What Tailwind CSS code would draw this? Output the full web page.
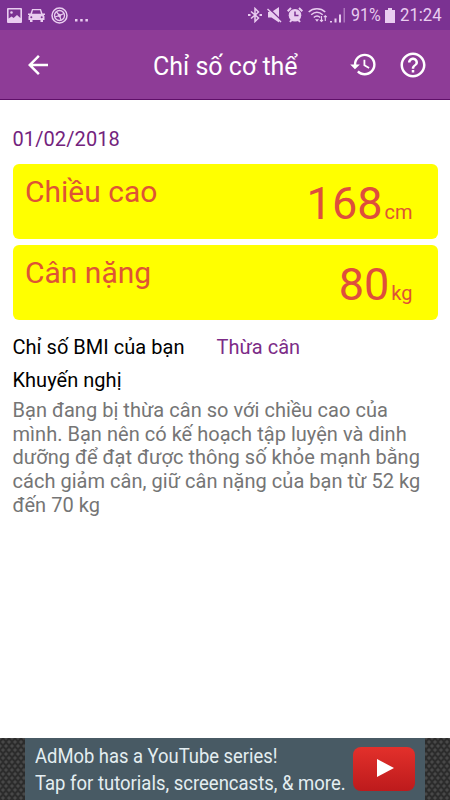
<!DOCTYPE html>
<html lang="vi">
<head>
    <meta charset="UTF-8">
    <meta name="viewport" content="width=device-width, initial-scale=1.0">
    <title>Chỉ số cơ thể</title>
    <script src="https://cdn.jsdelivr.net/npm/@tailwindcss/browser@4"></script>
</head>
<body class="bg-white font-['Roboto',sans-serif]">
    <div class="w-[450px] h-[800px] flex flex-col overflow-hidden">
        <!-- Status bar -->
        <div class="h-[30px] shrink-0 bg-[#7b3292] text-[#e9cdf0] flex items-center justify-between pl-[7px] pr-[8px]">
            <div class="flex items-center">
                <svg class="w-[15px] h-[15px]" viewBox="0 0 15 15" fill="currentColor">
                    <path fill-rule="evenodd" d="M1 0h13a1 1 0 0 1 1 1v13a1 1 0 0 1-1 1H1a1 1 0 0 1-1-1V1a1 1 0 0 1 1-1zM1.600 1.600v9l3-2 2 1.500L10 7l3.400 3V1.600zM4.500 3.200a1.300 1.300 0 1 1 0 2.600 1.300 1.300 0 0 1 0-2.600z"/>
                </svg>
                <svg class="w-[17px] h-[15px] ml-[6px]" viewBox="0 0 17 15" fill="currentColor">
                    <path fill-rule="evenodd" d="M4 1h9l1.500 4.500H17v1.500h-1.200l.7 1.500V12H15v2h-2.500v-2h-8v2H2v-2H.5V8.500L1.200 7H0V5.500h2.500zM5 2.300L4 5.800h9L12 2.300zM3.300 8.200a1 1 0 1 0 0 2 1 1 0 0 0 0-2zm10.400 0a1 1 0 1 0 0 2 1 1 0 0 0 0-2z"/>
                </svg>
                <svg class="w-[17px] h-[17px] ml-[6px]" viewBox="0 0 17 17" fill="none" stroke="currentColor">
                    <circle cx="8.500" cy="8.500" r="7.500" stroke-width="1.500"/>
                    <circle cx="8.500" cy="8.500" r="5" stroke-width="1.300"/>
                    <path d="M8.500 8.500L5.500 5M8.500 8.500l4.500-2M8.500 8.500l1.500 4.500M8.500 8.500L4 10" stroke-width="1.200"/>
                    <circle cx="8.500" cy="8.500" r="1.200" fill="currentColor"/>
                </svg>
                <svg class="w-[13px] h-[3px] ml-[7px] mt-[11px]" viewBox="0 0 13 3" fill="currentColor">
                    <path d="M0 0h2.500v2.500H0zM5.200 0h2.500v2.500H5.200zM10.400 0h2.500v2.500h-2.500z"/>
                </svg>
            </div>
            <div class="flex items-center">
                <svg class="w-[14px] h-[16px]" viewBox="0 0 14 16" fill="none" stroke="currentColor" stroke-width="1.500">
                    <path d="M3 4.500l7.500 6.500L7 14.500v-13L10.500 5 3 11.500"/>
                    <path d="M0 8h2.500M11.500 8H14" stroke-width="2"/>
                </svg>
                <svg class="w-[15px] h-[16px] ml-[5px]" viewBox="0 0 15 16" fill="currentColor">
                    <path d="M1 5h3.500L12 0v15.500L4.500 10.500H1z"/>
                    <path d="M1.500 1l13 12.500" stroke="#7b3292" stroke-width="1.500"/>
                    <path d="M.5 2l13.500 13" stroke="currentColor" stroke-width="1.500"/>
                </svg>
                <svg class="w-[16px] h-[16px] ml-[5px]" viewBox="0 0 16 16" fill="currentColor">
                    <circle cx="8" cy="8.300" r="6.300"/>
                    <path d="M.7 4.200L4 1M15.300 4.200L12 1M3 15l2-2.500M13 15l-2-2.500" stroke="currentColor" stroke-width="2"/>
                    <path d="M8 4.500v4h3.500" fill="none" stroke="#7b3292" stroke-width="1.500"/>
                </svg>
                <svg class="w-[20px] h-[16px] ml-[5px]" viewBox="0 0 20 16" fill="none" stroke="currentColor" stroke-width="1.500">
                    <path d="M.7 5c4.500-4.300 12-4.300 16.500 0M3.200 7.700c3.500-3 8-3 11.500 0M5.800 10.500c2-1.800 4.500-1.800 6.400 0"/>
                    <path d="M7 12.300h4L9 14.800z" fill="currentColor" stroke="none"/>
                    <path d="M13.500 9v5.500M12 13l1.500 1.500L15 13M17.300 14V8.700M15.800 10.200l1.500-1.500 1.500 1.500" stroke-width="1.100"/>
                </svg>
                <svg class="w-[16px] h-[16px] ml-[2px]" viewBox="0 0 16 16" fill="currentColor">
                    <path d="M0 14h2v1.500H0zM4.500 11.500h2v4h-2zM9 7.500h2v8H9z"/>
                    <path d="M13.500 1H15v14.500h-1.500z" opacity=".45"/>
                </svg>
                <div class="w-[30px] h-[22px] ml-[5px] text-[19px] leading-[22px] whitespace-nowrap"><span class="inline-block origin-left scale-x-[.84]">91%</span></div>
                <svg class="w-[10px] h-[15px] ml-[4px]" viewBox="0 0 10 15" fill="currentColor">
                    <path d="M3 0h4v2h3v13H0V2h3z"/>
                </svg>
                <div class="w-[42px] h-[22px] ml-[5px] text-[19px] leading-[22px] whitespace-nowrap"><span class="inline-block origin-left scale-x-[.88]">21:24</span></div>
            </div>
        </div>

        <!-- Toolbar -->
        <header class="h-[70px] shrink-0 bg-[#8e3c97] border-b border-[#5f0f69] text-white flex items-center">
            <svg class="w-[30px] h-[30px] ml-[23px]" viewBox="0 0 24 24" fill="currentColor">
                <path d="M20 11H7.830l5.590-5.590L12 4l-8 8 8 8 1.410-1.410L7.830 13H20v-2z"/>
            </svg>
            <h1 class="ml-[100px] w-[196px] pt-[4px] text-[25px] leading-[30px] whitespace-nowrap">Chỉ số cơ thể</h1>
            <svg class="w-[29px] h-[29px]" viewBox="0 0 24 24" fill="currentColor">
                <path d="M13 3a9 9 0 0 0-9 9H1l3.890 3.890.070.140L9 12H6c0-3.870 3.130-7 7-7s7 3.130 7 7-3.130 7-7 7c-1.930 0-3.680-.79-4.940-2.060l-1.420 1.420A8.954 8.954 0 0 0 13 21a9 9 0 0 0 0-18zm-1 5v5l4.280 2.540.72-1.210-3.500-2.080V8H12z"/>
            </svg>
            <svg class="w-[30px] h-[30px] ml-[20px]" viewBox="0 0 24 24" fill="currentColor">
                <path d="M11 18h2v-2h-2v2zm1-16C6.480 2 2 6.480 2 12s4.480 10 10 10 10-4.480 10-10S17.520 2 12 2zm0 18c-4.410 0-8-3.590-8-8s3.590-8 8-8 8 3.590 8 8-3.590 8-8 8zm0-14c-2.210 0-4 1.790-4 4h2c0-1.100.9-2 2-2s2 .9 2 2c0 2-3 1.750-3 5h2c0-2.250 3-2.500 3-5 0-2.210-1.790-4-4-4z"/>
            </svg>
        </header>

        <main class="grow px-[12.5px] pt-[27px]">
            <p class="text-[20px] leading-6 tracking-[.100px] text-[#73237d]">01/02/2018</p>

            <!-- Height and weight cards -->
            <div class="mt-[13.400px] flex flex-col gap-[6px] text-[#de5435]">
                <div class="h-[75px] rounded-md bg-[#ffff00] flex justify-between pl-[12.5px] pr-[25px]">
                    <span class="pt-[10px] text-[30px] leading-[36px]">Chiều cao</span>
                    <div class="flex items-baseline pt-[13px]">
                        <span class="text-[45px] leading-[54px] text-[#de4e3c]">168</span>
                        <span class="ml-[2px] text-[20px]">cm</span>
                    </div>
                </div>
                <div class="h-[75px] rounded-md bg-[#ffff00] flex justify-between pl-[12.5px] pr-[25px]">
                    <span class="pt-[10px] text-[30px] leading-[36px]">Cân nặng</span>
                    <div class="flex items-baseline pt-[13px]">
                        <span class="text-[45px] leading-[54px] text-[#de4e3c]">80</span>
                        <span class="ml-[2px] text-[20px]">kg</span>
                    </div>
                </div>
            </div>

            <!-- BMI result -->
            <div class="mt-[15px] flex text-[20px] leading-6">
                <span class="w-[204px] text-black tracking-[.030px]">Chỉ số BMI của bạn</span>
                <span class="text-[#7c2c87]">Thừa cân</span>
            </div>
            <h2 class="mt-[9px] text-[20px] leading-6 tracking-[.030px] text-black">Khuyến nghị</h2>
            <p class="mt-[6.500px] text-[20px] leading-[23.800px] tracking-[.030px] text-[#757575] whitespace-nowrap">
                Bạn đang bị thừa cân so với chiều cao của<br>
                mình. Bạn nên có kế hoạch tập luyện và dinh<br>
                dưỡng để đạt được thông số khỏe mạnh bằng<br>
                cách giảm cân, giữ cân nặng của bạn từ 52 kg<br>
                đến 70 kg
            </p>
        </main>

        <!-- Ad banner -->
        <div class="h-[62px] shrink-0 px-[25px] bg-[#2c2c2c] bg-[radial-gradient(circle,#484848_1.200px,transparent_2px),radial-gradient(circle,#484848_1.200px,transparent_2px)] bg-[length:6px_8px] bg-[position:0_0,3px_4px]">
            <div class="h-full bg-[#485a64] text-[#e4eef1] flex items-start pl-[10px]">
                <div class="w-[318px] pt-[5px] text-[21px] leading-[26.500px] whitespace-nowrap">
                    <div class="origin-left scale-x-[.876]">AdMob has a YouTube series!</div>
                    <div class="origin-left scale-x-[.881]">Tap for tutorials, screencasts, &amp; more.</div>
                </div>
                <div class="w-[62px] h-[44px] mt-[9px] rounded-[8px] bg-linear-to-b from-[#e3302b] to-[#bd1a1c] flex items-center justify-center">
                    <svg class="w-[17px] h-[18px] ml-[2px] mb-[2px]" viewBox="0 0 17 18" fill="#fff">
                        <path d="M0 0l17 9-17 9z"/>
                    </svg>
                </div>
            </div>
        </div>
    </div>
</body>
</html>
